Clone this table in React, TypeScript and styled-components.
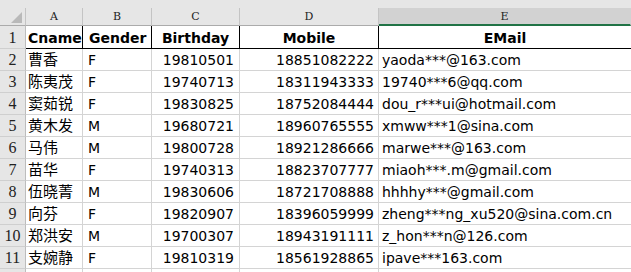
import React from "react"
import styled, { createGlobalStyle } from "styled-components"

const GlobalStyle = createGlobalStyle`
  html, body {
    margin: 0;
    padding: 0;
    background: #ffffff;
  }
  body {
    font-family: "DejaVu Sans", "Noto Sans CJK SC", sans-serif;
    color: #000000;
  }
`

interface Person {
  name: string
  gender: string
  birthday: string
  mobile: string
  email: string
}

const people: Person[] = [
  { name: "曹香", gender: "F", birthday: "19810501", mobile: "18851082222", email: "yaoda***@163.com" },
  { name: "陈夷茂", gender: "F", birthday: "19740713", mobile: "18311943333", email: "19740***6@qq.com" },
  { name: "窦茹锐", gender: "F", birthday: "19830825", mobile: "18752084444", email: "dou_r***ui@hotmail.com" },
  { name: "黄木发", gender: "M", birthday: "19680721", mobile: "18960765555", email: "xmww***1@sina.com" },
  { name: "马伟", gender: "M", birthday: "19800728", mobile: "18921286666", email: "marwe***@163.com" },
  { name: "苗华", gender: "F", birthday: "19740313", mobile: "18823707777", email: "miaoh***.m@gmail.com" },
  { name: "伍晓菁", gender: "M", birthday: "19830606", mobile: "18721708888", email: "hhhhy***@gmail.com" },
  { name: "向芬", gender: "F", birthday: "19820907", mobile: "18396059999", email: "zheng***ng_xu520@sina.com.cn" },
  { name: "郑洪安", gender: "M", birthday: "19700307", mobile: "18943191111", email: "z_hon***n@126.com" },
  { name: "支婉静", gender: "F", birthday: "19810319", mobile: "18561928865", email: "ipave***163.com" },
]

const columns = ["A", "B", "C", "D", "E"]

const Sheet = styled.div`
  width: 631px;
  height: 272px;
  overflow: hidden;
  background: #ffffff;
`

const TopStrip = styled.div`
  height: 8px;
  background: #e6e6e6;
`

const Grid = styled.div`
  display: grid;
  grid-template-columns: 26px 57px 69px 88px 139px 1fr;
  grid-auto-rows: 22px;
  grid-template-rows: 18px 23px;
`

const Corner = styled.div`
  position: relative;
  background: #e6e6e6;
  border-right: 1px solid #c4c4c4;
  border-bottom: 1px solid #ababab;
  &::after {
    content: "";
    position: absolute;
    right: 3px;
    bottom: 2px;
    width: 0;
    height: 0;
    border-left: 11px solid transparent;
    border-bottom: 11px solid #b9b9b9;
  }
`

const ColHead = styled.div<{ $selected?: boolean }>`
  display: flex;
  align-items: flex-end;
  justify-content: center;
  background: ${p => (p.$selected ? "#d2d2d2" : "#e6e6e6")};
  border-right: 1px solid ${p => (p.$selected ? "#d2d2d2" : "#c4c4c4")};
  border-bottom: ${p => (p.$selected ? "2px solid #217346" : "1px solid #ababab")};
  font-family: "DejaVu Serif", "Liberation Serif", serif;
  font-size: 11px;
  line-height: 13px;
  padding-bottom: ${p => (p.$selected ? "1px" : "2px")};
  color: #222222;
`

const RowHead = styled.div`
  display: flex;
  align-items: center;
  justify-content: center;
  background: #e6e6e6;
  border-right: 1px solid #bdbdbd;
  border-bottom: 1px solid #cfcfcf;
  font-family: "Liberation Serif", "DejaVu Serif", serif;
  font-size: 16px;
  color: #222222;
  padding-top: 1px;
`

type Align = "left" | "right" | "center"

const Cell = styled.div<{ $align: Align; $pad: number; $title?: boolean; $cjk?: boolean }>`
  display: flex;
  align-items: flex-end;
  justify-content: ${p => (p.$align === "left" ? "flex-start" : p.$align === "right" ? "flex-end" : "center")};
  padding: ${p => (p.$align === "right" ? `0 ${p.$pad}px 2px 0` : `0 0 2px ${p.$pad}px`)};
  border-right: 1px solid ${p => (p.$title ? "#000000" : "#d4d4d4")};
  border-bottom: 1px solid ${p => (p.$title ? "#000000" : "#d4d4d4")};
  font-size: ${p => (p.$cjk ? "15px" : "14px")};
  font-weight: ${p => (p.$title ? 700 : 400)};
  line-height: 16px;
  white-space: nowrap;
  overflow: hidden;
`

const LastCell = styled(Cell)`
  border-right: none;
`

export default function App() {
  return (
    <>
      <GlobalStyle />
      <Sheet>
        <TopStrip />
        <Grid>
          <Corner />
          {columns.map(c => (
            <ColHead key={c} $selected={c === "E"}>{c}</ColHead>
          ))}

          <RowHead>1</RowHead>
          <Cell $align="left" $pad={2} $title>Cname</Cell>
          <Cell $align="left" $pad={6} $title>Gender</Cell>
          <Cell $align="center" $pad={0} $title>Birthday</Cell>
          <Cell $align="center" $pad={0} $title>Mobile</Cell>
          <LastCell $align="center" $pad={0} $title>EMail</LastCell>

          {people.map((p, i) => (
            <React.Fragment key={p.mobile}>
              <RowHead>{i + 2}</RowHead>
              <Cell $align="left" $pad={2} $cjk>{p.name}</Cell>
              <Cell $align="left" $pad={5}>{p.gender}</Cell>
              <Cell $align="right" $pad={5}>{p.birthday}</Cell>
              <Cell $align="right" $pad={4}>{p.mobile}</Cell>
              <LastCell $align="left" $pad={3}>{p.email}</LastCell>
            </React.Fragment>
          ))}

          <RowHead />
          <Cell $align="left" $pad={2} />
          <Cell $align="left" $pad={2} />
          <Cell $align="left" $pad={2} />
          <Cell $align="left" $pad={2} />
          <LastCell $align="left" $pad={2} />
        </Grid>
      </Sheet>
    </>
  )
}
